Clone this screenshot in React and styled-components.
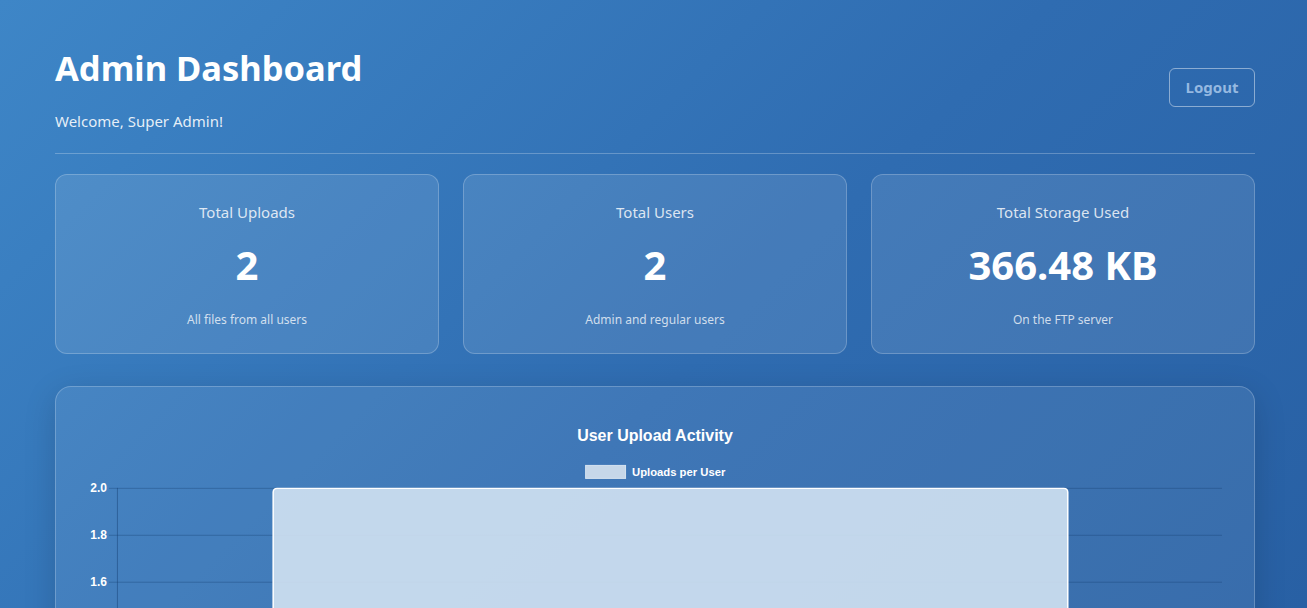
import React from "react";
import styled, { createGlobalStyle } from "styled-components";

const GlobalStyle = createGlobalStyle`
  * { box-sizing: border-box; }
  body {
    margin: 0;
    min-height: 100vh;
    font-family: "Noto Sans", "Open Sans", sans-serif;
    color: #fff;
    background: linear-gradient(135deg, #3e86c7 0%, #2f6cb1 55%, #2860a4 100%);
    background-attachment: fixed;
  }
`;

const Page = styled.div`
  max-width: 1203px;
  margin: 0 auto;
  padding: 44px 0 40px 3px;
`;

const Header = styled.header`
  display: flex;
  justify-content: space-between;
  align-items: center;
  padding-bottom: 22px;
  border-bottom: 1px solid rgba(255, 255, 255, 0.25);
  margin-bottom: 20px;
`;

const Title = styled.h1`
  margin: 0;
  font-size: 34.5px;
  line-height: 48px;
  font-weight: 700;
`;

const Welcome = styled.p`
  margin: 19px 0 0;
  font-size: 15px;
  color: rgba(255, 255, 255, 0.88);
`;

const LogoutButton = styled.button`
  width: 86px;
  height: 39px;
  border: 1px solid rgba(255, 255, 255, 0.45);
  border-radius: 6px;
  background: transparent;
  color: rgba(170, 200, 235, 0.85);
  font-family: inherit;
  font-size: 15px;
  font-weight: 700;
  line-height: 1;
  padding-bottom: 2px;
  cursor: pointer;
`;

const StatsGrid = styled.div`
  display: grid;
  grid-template-columns: repeat(3, 1fr);
  gap: 24px;
  margin-bottom: 32px;
`;

const StatCard = styled.div`
  height: 180px;
  display: flex;
  flex-direction: column;
  align-items: center;
  padding-top: 27px;
  background: rgba(255, 255, 255, 0.1);
  border: 1px solid rgba(255, 255, 255, 0.22);
  border-radius: 12px;
`;

const StatLabel = styled.div`
  font-size: 15px;
  color: rgba(255, 255, 255, 0.82);
`;

const StatValue = styled.div`
  margin-top: 17px;
  font-size: 40px;
  line-height: 52px;
  font-weight: 700;
`;

const StatNote = styled.div`
  margin-top: 20px;
  font-size: 12px;
  color: rgba(255, 255, 255, 0.75);
`;

const ChartCard = styled.section`
  padding: 30px;
  background: rgba(255, 255, 255, 0.08);
  border: 1px solid rgba(255, 255, 255, 0.22);
  border-radius: 16px;
  box-shadow: 0 8px 32px rgba(0, 0, 0, 0.15);
`;

const ChartSvg = styled.svg`
  display: block;
  width: 100%;
  height: 400px;
  font-family: "Liberation Sans", Arial, sans-serif;
`;

const stats = [
  { label: "Total Uploads", value: "2", note: "All files from all users" },
  { label: "Total Users", value: "2", note: "Admin and regular users" },
  { label: "Total Storage Used", value: "366.48 KB", note: "On the FTP server" },
];

const ticks = [2.0, 1.8, 1.6, 1.4, 1.2, 1.0, 0.8, 0.6, 0.4, 0.2, 0];

const UploadChart = () => {
  const top = 71;
  const step = 47;
  const yFor = (v) => top + ((2 - v) / 0.2) * step;
  return (
    <ChartSvg viewBox="0 0 1140 400" preserveAspectRatio="xMinYMin meet">
      <text x="570" y="24" textAnchor="middle" fill="#fff" fontSize="16" fontWeight="700">
        User Upload Activity
      </text>
      <rect x="500.5" y="48.5" width="40" height="13" fill="#c6d7e9" stroke="#d6e3f0" />
      <text x="547" y="59" fill="#fff" fontSize="11.3" fontWeight="700">
        Uploads per User
      </text>
      {ticks.map((t) => (
        <g key={t}>
          <line x1="23" x2="1138" y1={yFor(t) + 0.5} y2={yFor(t) + 0.5} stroke="rgba(20,60,110,0.35)" />
          <text x="21" y={yFor(t) + 4} textAnchor="end" fill="#fff" fontSize="12" fontWeight="700">
            {t.toFixed(1)}
          </text>
        </g>
      ))}
      <line x1="31.5" x2="31.5" y1={top} y2="400" stroke="rgba(20,60,110,0.45)" />
      <path
        d={`M187.5 400 V${top + 4.5} Q187.5 ${top + 0.5} 191.5 ${top + 0.5} H979.5 Q983.5 ${top + 0.5} 983.5 ${top + 4.5} V400`}
        fill="rgba(210,226,242,0.9)"
        stroke="#ffffff"
        strokeWidth="1.5"
      />
    </ChartSvg>
  );
};

export default function App() {
  return (
    <>
      <GlobalStyle />
      <Page>
        <Header>
          <div>
            <Title>Admin Dashboard</Title>
            <Welcome>Welcome, Super Admin!</Welcome>
          </div>
          <LogoutButton>Logout</LogoutButton>
        </Header>
        <StatsGrid>
          {stats.map((s) => (
            <StatCard key={s.label}>
              <StatLabel>{s.label}</StatLabel>
              <StatValue>{s.value}</StatValue>
              <StatNote>{s.note}</StatNote>
            </StatCard>
          ))}
        </StatsGrid>
        <ChartCard>
          <UploadChart />
        </ChartCard>
      </Page>
    </>
  );
}
